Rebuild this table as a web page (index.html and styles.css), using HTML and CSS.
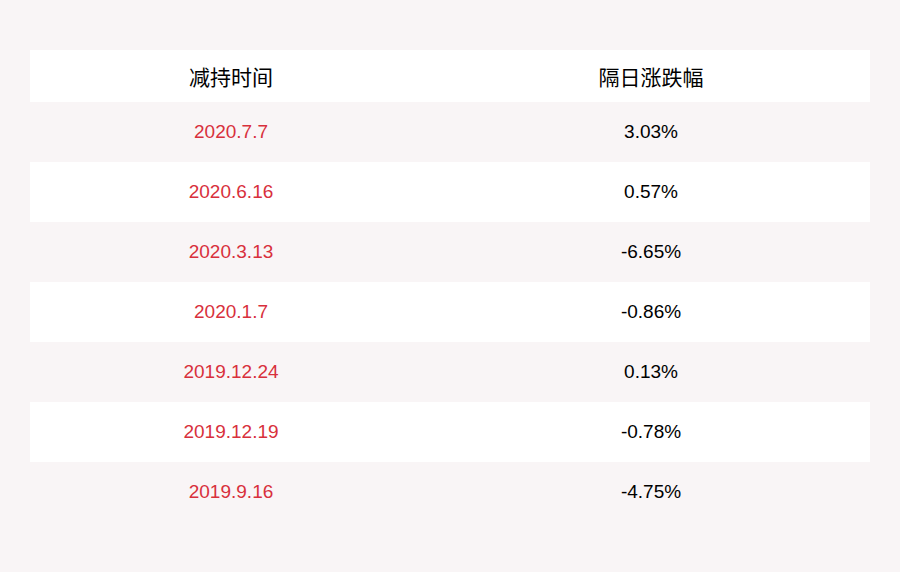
FILE: index.html
```html
<!DOCTYPE html>
<html>
<head>
<meta charset="utf-8">
<link rel="stylesheet" href="styles.css">
</head>
<body>
<div class="wrap">
  <div class="table">
    <div class="row head"><div class="c1">减持时间</div><div class="c2">隔日涨跌幅</div></div>
    <div class="row alt"><div class="c1 red">2020.7.7</div><div class="c2">3.03%</div></div>
    <div class="row"><div class="c1 red">2020.6.16</div><div class="c2">0.57%</div></div>
    <div class="row alt"><div class="c1 red">2020.3.13</div><div class="c2">-6.65%</div></div>
    <div class="row"><div class="c1 red">2020.1.7</div><div class="c2">-0.86%</div></div>
    <div class="row alt"><div class="c1 red">2019.12.24</div><div class="c2">0.13%</div></div>
    <div class="row"><div class="c1 red">2019.12.19</div><div class="c2">-0.78%</div></div>
    <div class="row alt"><div class="c1 red">2019.9.16</div><div class="c2">-4.75%</div></div>
  </div>
</div>
</body>
</html>
```
FILE: styles.css
```css
html, body { margin: 0; padding: 0; }
body { background: #f9f5f6; width: 900px; height: 572px; overflow: hidden; font-family: "Liberation Sans", "Noto Sans CJK SC", sans-serif; }
.wrap { padding: 50px 30px 0 30px; }
.table { display: flex; flex-direction: column; }
.row { display: flex; height: 60px; align-items: center; background: #ffffff; font-size: 19px; color: #000; }
.row.alt { background: #f9f5f6; }
.row.head { height: 52px; font-size: 21px; font-family: "Noto Sans CJK SC", sans-serif; color: #000; }
.c1 { width: 402px; text-align: center; }
.c2 { width: 438px; text-align: center; }
.red { color: #d8303c; }
```
